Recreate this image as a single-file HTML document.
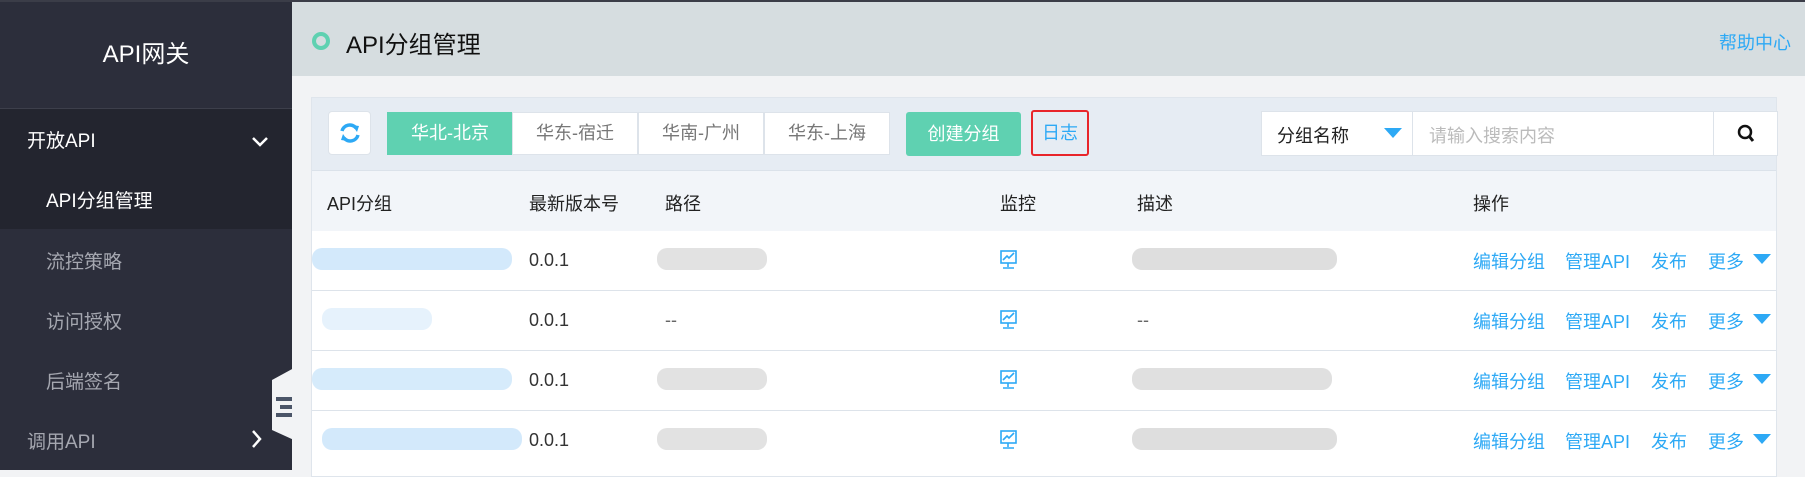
<!DOCTYPE html>
<html><head><meta charset="utf-8"><style>
*{margin:0;padding:0;box-sizing:border-box}
body{width:1805px;height:470px;overflow:hidden;background:#f2f3f5;font-family:"Liberation Sans","Noto Sans CJK SC",sans-serif;position:relative}
.abs{position:absolute}
#side{left:0;top:0;width:292px;height:470px;background:#2c2e3b;border-top:2px solid #3b3d48}
#side .t{left:0;width:292px;top:32px;text-align:center;color:#fff;font-size:24px}
#side .d{left:0;top:106px;width:292px;height:1px;background:#3d3f4b}
.m{color:#fff;font-size:19px}
.s{color:#a5a7b0;font-size:19px}
#head{left:292px;top:0;width:1513px;height:76px;background:#d6dde0;border-top:2px solid #3b3d48}
.blue{color:#2da9f5}
#panel{left:311px;top:97px;width:1466px;height:380px;background:#fff;border:1px solid #dfe5ec}
#bar{left:0;top:0;width:1464px;height:73px;background:#e6ecf3;border-bottom:1px solid #dbe2ea}
.tab{top:14px;height:43px;width:126px;border:1px solid #dde3ea;background:#fff;color:#777;font-size:18px;text-align:center;line-height:41px}
#thead{left:0;top:73px;width:1464px;height:60px;background:#f2f5f9}
.th{font-size:18px;color:#222;top:92px}
.row{left:0;width:1464px;height:60px;border-bottom:1px solid #dde3ea}
.c{font-size:18px;color:#333}
.op{font-size:18px;color:#2da9f5}
.blurb{border-radius:10px;height:22px}
</style></head><body>
<div id="side" class="abs">
 <div class="abs t">API网关</div>
 <div class="abs d"></div>
 <div class="abs" style="left:0;top:107px;width:292px;height:120px;background:#23252f"></div>
 <div class="abs m" style="left:27px;top:124px">开放API</div>
 <svg class="abs" style="left:250px;top:133px" width="20" height="14"><path d="M3 3 L10 10 L17 3" stroke="#fff" stroke-width="2.5" fill="none"/></svg>
 <div class="abs m" style="left:46px;top:184px">API分组管理</div>
 <div class="abs s" style="left:46px;top:245px">流控策略</div>
 <div class="abs s" style="left:46px;top:305px">访问授权</div>
 <div class="abs s" style="left:46px;top:365px">后端签名</div>
 <div class="abs s" style="left:27px;top:425px">调用API</div>
 <svg class="abs" style="left:250px;top:426px" width="14" height="22"><path d="M3 3 L10 11 L3 19" stroke="#fff" stroke-width="2.5" fill="none"/></svg>
</div>
<svg class="abs" style="left:272px;top:368px" width="22" height="72"><path d="M22 0 L22 72 L0 62 L0 12 Z" fill="#f2f3f5"/><rect x="4" y="29" width="16" height="4" fill="#4b5568"/><rect x="8" y="37" width="12" height="4" fill="#4b5568"/><rect x="4" y="45" width="16" height="4" fill="#4b5568"/></svg>
<div id="head" class="abs">
 <div class="abs" style="left:20px;top:30px;width:18px;height:18px;border:4px solid #5fd1b1;border-radius:50%"></div>
 <div class="abs" style="left:54px;top:23px;font-size:24px;color:#111">API分组管理</div>
 <div class="abs blue" style="right:14px;top:27px;font-size:18px">帮助中心</div>
</div>
<div id="panel" class="abs">
 <div id="bar" class="abs">
  <div class="abs" style="left:16px;top:13px;width:43px;height:44px;background:#fff;border:1px solid #dde3ea;border-radius:4px"></div>
  <svg class="abs" style="left:26px;top:24px" width="24" height="22"><path d="M4 9 A8 8 0 0 1 18 6" stroke="#2da9f5" stroke-width="3.5" fill="none"/><path d="M14 3 L21 4 L19 10 Z" fill="#2da9f5"/><path d="M20 13 A8 8 0 0 1 6 16" stroke="#2da9f5" stroke-width="3.5" fill="none"/><path d="M10 19 L3 18 L5 12 Z" fill="#2da9f5"/></svg>
  <div class="abs tab" style="left:75px;background:#5fd1b1;color:#fff;border-color:#5fd1b1">华北-北京</div>
  <div class="abs tab" style="left:200px">华东-宿迁</div>
  <div class="abs tab" style="left:326px">华南-广州</div>
  <div class="abs tab" style="left:452px">华东-上海</div>
  <div class="abs" style="left:594px;top:14px;width:115px;height:44px;background:#5fd1b1;border-radius:3px;color:#fff;font-size:18px;text-align:center;line-height:44px">创建分组</div>
  <div class="abs" style="left:719px;top:12px;width:58px;height:46px;border:2px solid #e8252a;border-radius:3px;color:#2da9f5;font-size:18px;text-align:center;line-height:42px">日志</div>
  <div class="abs" style="left:949px;top:13px;width:517px;height:45px;background:#fff;border:1px solid #dde3ea"></div>
  <div class="abs" style="left:1100px;top:13px;width:1px;height:45px;background:#dde3ea"></div>
  <div class="abs" style="left:1401px;top:13px;width:1px;height:45px;background:#dde3ea"></div>
  <div class="abs" style="left:965px;top:24px;font-size:18px;color:#222">分组名称</div>
  <svg class="abs" style="left:1072px;top:30px" width="18" height="12"><path d="M0 0 L18 0 L9 10 Z" fill="#2da9f5"/></svg>
  <div class="abs" style="left:1117px;top:24px;font-size:18px;color:#bbb">请输入搜索内容</div>
  <svg class="abs" style="left:1425px;top:26px" width="18" height="20"><circle cx="8" cy="8" r="6" stroke="#111" stroke-width="2.5" fill="none"/><path d="M12 12 L16 17" stroke="#111" stroke-width="3"/></svg>
 </div>
 <div id="thead" class="abs"></div>
 <div class="abs th" style="left:15px">API分组</div>
 <div class="abs th" style="left:217px">最新版本号</div>
 <div class="abs th" style="left:353px">路径</div>
 <div class="abs th" style="left:688px">监控</div>
 <div class="abs th" style="left:825px">描述</div>
 <div class="abs th" style="left:1161px">操作</div>
 <div class="abs row" style="top:133px"></div>
 <div class="abs row" style="top:193px"></div>
 <div class="abs row" style="top:253px"></div>
 <div class="abs blurb" style="left:0;top:150px;width:200px;background:#d3e9fb"></div>
 <div class="abs blurb" style="left:10px;top:210px;width:110px;background:#e6f2fc"></div>
 <div class="abs blurb" style="left:0;top:270px;width:200px;background:#d6ebfb"></div>
 <div class="abs blurb" style="left:10px;top:330px;width:200px;background:#d3e9fb"></div>
 <div class="abs c" style="left:217px;top:152px">0.0.1</div>
 <div class="abs c" style="left:217px;top:212px">0.0.1</div>
 <div class="abs c" style="left:217px;top:272px">0.0.1</div>
 <div class="abs c" style="left:217px;top:332px">0.0.1</div>
 <div class="abs blurb" style="left:345px;top:150px;width:110px;background:#e2e2e2"></div>
 <div class="abs c" style="left:353px;top:212px;color:#666">--</div>
 <div class="abs blurb" style="left:345px;top:270px;width:110px;background:#e2e2e2"></div>
 <div class="abs blurb" style="left:345px;top:330px;width:110px;background:#e2e2e2"></div>
 <div class="abs blurb" style="left:820px;top:150px;width:205px;background:#dedede"></div>
 <div class="abs c" style="left:825px;top:212px;color:#666">--</div>
 <div class="abs blurb" style="left:820px;top:270px;width:200px;background:#e0e0e0"></div>
 <div class="abs blurb" style="left:820px;top:330px;width:205px;background:#dedede"></div>
 <svg class="abs" style="left:688px;top:152px" width="18" height="20"><rect x="1" y="1" width="15" height="12" stroke="#2da9f5" stroke-width="1.6" fill="none"/><path d="M3 10 L7 6 L9 8 L14 3 M8 13 V17 M3 18 H14" stroke="#2da9f5" stroke-width="1.6" fill="none"/></svg>
 <svg class="abs" style="left:688px;top:212px" width="18" height="20"><rect x="1" y="1" width="15" height="12" stroke="#2da9f5" stroke-width="1.6" fill="none"/><path d="M3 10 L7 6 L9 8 L14 3 M8 13 V17 M3 18 H14" stroke="#2da9f5" stroke-width="1.6" fill="none"/></svg>
 <svg class="abs" style="left:688px;top:272px" width="18" height="20"><rect x="1" y="1" width="15" height="12" stroke="#2da9f5" stroke-width="1.6" fill="none"/><path d="M3 10 L7 6 L9 8 L14 3 M8 13 V17 M3 18 H14" stroke="#2da9f5" stroke-width="1.6" fill="none"/></svg>
 <svg class="abs" style="left:688px;top:332px" width="18" height="20"><rect x="1" y="1" width="15" height="12" stroke="#2da9f5" stroke-width="1.6" fill="none"/><path d="M3 10 L7 6 L9 8 L14 3 M8 13 V17 M3 18 H14" stroke="#2da9f5" stroke-width="1.6" fill="none"/></svg>

 <div class="abs op" style="left:1161px;top:150px">编辑分组</div><div class="abs op" style="left:1253px;top:150px">管理API</div><div class="abs op" style="left:1339px;top:150px">发布</div><div class="abs op" style="left:1396px;top:150px">更多</div>
 <div class="abs op" style="left:1161px;top:210px">编辑分组</div><div class="abs op" style="left:1253px;top:210px">管理API</div><div class="abs op" style="left:1339px;top:210px">发布</div><div class="abs op" style="left:1396px;top:210px">更多</div>
 <div class="abs op" style="left:1161px;top:270px">编辑分组</div><div class="abs op" style="left:1253px;top:270px">管理API</div><div class="abs op" style="left:1339px;top:270px">发布</div><div class="abs op" style="left:1396px;top:270px">更多</div>
 <div class="abs op" style="left:1161px;top:330px">编辑分组</div><div class="abs op" style="left:1253px;top:330px">管理API</div><div class="abs op" style="left:1339px;top:330px">发布</div><div class="abs op" style="left:1396px;top:330px">更多</div>
 <svg class="abs" style="left:1441px;top:156px" width="18" height="12"><path d="M0 0 L18 0 L9 10 Z" fill="#2da9f5"/></svg>
 <svg class="abs" style="left:1441px;top:216px" width="18" height="12"><path d="M0 0 L18 0 L9 10 Z" fill="#2da9f5"/></svg>
 <svg class="abs" style="left:1441px;top:276px" width="18" height="12"><path d="M0 0 L18 0 L9 10 Z" fill="#2da9f5"/></svg>
 <svg class="abs" style="left:1441px;top:336px" width="18" height="12"><path d="M0 0 L18 0 L9 10 Z" fill="#2da9f5"/></svg>
</div>
</body></html>
